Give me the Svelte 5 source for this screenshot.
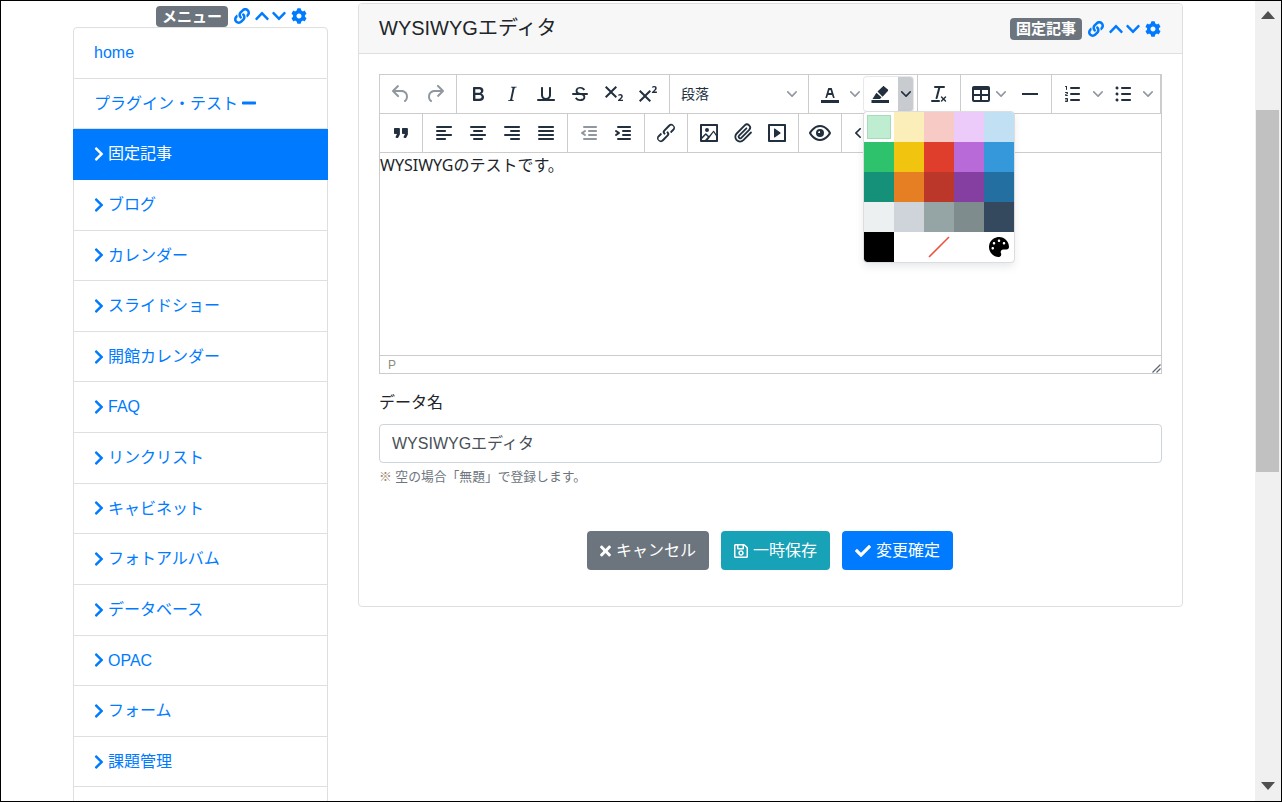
<script>
  const menu = [
    'ブログ', 'カレンダー', 'スライドショー', '開館カレンダー', 'FAQ', 'リンクリスト', 'キャビネット',
    'フォトアルバム', 'データベース', 'OPAC', 'フォーム', '課題管理',
  ];

  // font awesome 5 glyphs: [viewbox width, path]
  const fa = {
    right: [320, 'M285.476 272.971L91.132 467.314c-9.373 9.373-24.569 9.373-33.941 0l-22.667-22.667c-9.357-9.357-9.375-24.522-.04-33.901L188.505 256 34.484 101.255c-9.335-9.379-9.317-24.544.04-33.901l22.667-22.667c9.373-9.373 24.569-9.373 33.941 0L285.475 239.03c9.373 9.372 9.373 24.568.001 33.941z'],
    up: [448, 'M240.971 130.524l194.343 194.343c9.373 9.373 9.373 24.569 0 33.941l-22.667 22.667c-9.357 9.357-24.522 9.375-33.901.04L224 227.495 69.255 381.516c-9.379 9.335-24.544 9.317-33.901-.04l-22.667-22.667c-9.373-9.373-9.373-24.569 0-33.941L207.03 130.525c9.372-9.373 24.568-9.373 33.941-.001z'],
    down: [448, 'M207.029 381.476L12.686 187.132c-9.373-9.373-9.373-24.569 0-33.941l22.667-22.667c9.357-9.357 24.522-9.375 33.901-.04L224 284.505l154.745-154.021c9.379-9.335 24.544-9.317 33.901.04l22.667 22.667c9.373 9.373 9.373 24.569 0 33.941L240.971 381.476c-9.373 9.372-24.569 9.372-33.942 0z'],
    check: [512, 'M173.898 439.404l-166.4-166.4c-9.997-9.997-9.997-26.206 0-36.204l36.203-36.204c9.997-9.998 26.207-9.998 36.204 0L192 312.69 432.095 72.596c9.997-9.997 26.207-9.997 36.204 0l36.203 36.204c9.997 9.997 9.997 26.206 0 36.204l-294.4 294.401c-9.998 9.997-26.207 9.997-36.204-.001z'],
    times: [352, 'M242.72 256l100.07-100.07c12.28-12.28 12.28-32.19 0-44.48l-22.24-22.24c-12.28-12.28-32.19-12.28-44.48 0L176 189.28 75.93 89.21c-12.28-12.28-32.19-12.28-44.48 0L9.21 111.45c-12.28 12.28-12.28 32.19 0 44.48L109.28 256 9.21 356.07c-12.28 12.28-12.28 32.19 0 44.48l22.24 22.24c12.28 12.28 32.2 12.28 44.48 0L176 322.72l100.07 100.07c12.28 12.28 32.2 12.28 44.48 0l22.24-22.24c12.28-12.28 12.28-32.19 0-44.48L242.72 256z'],
    minus: [448, 'M416 208H32c-17.67 0-32 14.33-32 32v32c0 17.67 14.33 32 32 32h384c17.67 0 32-14.33 32-32v-32c0-17.67-14.33-32-32-32z'],
    cog: [512, 'M487.4 315.7l-42.6-24.6c4.3-23.2 4.3-47 0-70.2l42.6-24.6c4.9-2.8 7.1-8.6 5.5-14-11.1-35.6-30-67.8-54.7-94.6-3.8-4.1-10-5.1-14.8-2.3L380.8 110c-17.9-15.4-38.5-27.3-60.8-35.1V25.8c0-5.6-3.9-10.5-9.4-11.7-36.7-8.2-74.3-7.8-109.2 0-5.5 1.2-9.4 6.1-9.4 11.7V75c-22.2 7.9-42.8 19.8-60.8 35.1L88.7 85.5c-4.9-2.8-11-1.9-14.8 2.3-24.7 26.7-43.6 58.9-54.7 94.6-1.7 5.4.6 11.2 5.5 14L67.3 221c-4.3 23.2-4.3 47 0 70.2l-42.6 24.6c-4.9 2.8-7.1 8.6-5.5 14 11.1 35.6 30 67.8 54.7 94.6 3.8 4.1 10 5.1 14.8 2.3l42.6-24.6c17.9 15.4 38.5 27.3 60.8 35.1v49.2c0 5.6 3.9 10.5 9.4 11.7 36.7 8.2 74.3 7.8 109.2 0 5.5-1.2 9.4-6.1 9.4-11.7v-49.2c22.2-7.9 42.8-19.8 60.8-35.1l42.6 24.6c4.9 2.8 11 1.9 14.8-2.3 24.7-26.7 43.6-58.9 54.7-94.6 1.5-5.5-.7-11.3-5.6-14.1zM256 336c-44.1 0-80-35.9-80-80s35.9-80 80-80 80 35.9 80 80-35.9 80-80 80z'],
    link: [512, 'M326.612 185.391c59.747 59.809 58.927 155.698.36 214.59-.11.12-.24.25-.36.37l-67.2 67.2c-59.27 59.27-155.699 59.262-214.96 0-59.27-59.26-59.27-155.7 0-214.96l37.106-37.106c9.84-9.84 26.786-3.3 27.294 10.606.648 17.722 3.826 35.527 9.69 52.721 1.986 5.822.567 12.262-3.783 16.612l-13.087 13.087c-28.026 28.026-28.905 73.66-1.155 101.96 28.024 28.579 74.086 28.749 102.325.51l67.2-67.19c28.191-28.191 28.073-73.757 0-101.83-3.701-3.694-7.429-6.564-10.341-8.569a16.037 16.037 0 0 1-6.947-12.606c-.396-10.567 3.348-21.456 11.698-29.806l21.054-21.055c5.521-5.521 14.182-6.199 20.584-1.731a152.482 152.482 0 0 1 20.522 17.197zM467.547 44.449c-59.261-59.262-155.69-59.27-214.96 0l-67.2 67.2c-.12.12-.25.25-.36.37-58.566 58.892-59.387 154.781.36 214.59a152.454 152.454 0 0 0 20.521 17.196c6.402 4.468 15.064 3.789 20.584-1.731l21.054-21.055c8.35-8.35 12.094-19.239 11.698-29.806a16.037 16.037 0 0 0-6.947-12.606c-2.912-2.005-6.64-4.875-10.341-8.569-28.073-28.073-28.191-73.639 0-101.83l67.2-67.19c28.239-28.239 74.3-28.069 102.325.51 27.75 28.3 26.872 73.934-1.155 101.96l-13.087 13.087c-4.35 4.35-5.769 10.79-3.783 16.612 5.864 17.194 9.042 34.999 9.69 52.721.509 13.906 17.454 20.446 27.294 10.606l37.106-37.106c59.271-59.259 59.271-155.699.001-214.959z'],
    save: [448, 'M433.941 129.941l-83.882-83.882A48 48 0 0 0 316.118 32H48C21.49 32 0 53.49 0 80v352c0 26.51 21.49 48 48 48h352c26.51 0 48-21.49 48-48V163.882a48 48 0 0 0-14.059-33.941zM272 80v80H144V80h128zm122 352H54a6 6 0 0 1-6-6V86a6 6 0 0 1 6-6h42v104c0 13.255 10.745 24 24 24h176c13.255 0 24-10.745 24-24V83.882l78.243 78.243a6 6 0 0 1 1.757 4.243V426a6 6 0 0 1-6 6zM224 232c-48.523 0-88 39.477-88 88s39.477 88 88 88 88-39.477 88-88-39.477-88-88-88zm0 128c-22.056 0-40-17.944-40-40s17.944-40 40-40 40 17.944 40 40-17.944 40-40 40z'],
    palette: [512, 'M204.3 5C104.9 24.4 24.8 104.3 5.2 203.4c-37 187 131.7 326.4 258.8 306.7 41.2-6.4 61.4-54.6 42.5-91.7-23.1-45.4 9.9-98.4 60.9-98.4h79.7c35.8 0 64.8-29.6 64.9-65.3C511.5 97.1 368.1-26.9 204.3 5zM96 320c-17.7 0-32-14.3-32-32s14.3-32 32-32 32 14.3 32 32-14.3 32-32 32zm32-128c-17.7 0-32-14.3-32-32s14.3-32 32-32 32 14.3 32 32-14.3 32-32 32zm128-64c-17.7 0-32-14.3-32-32s14.3-32 32-32 32 14.3 32 32-14.3 32-32 32zm128 64c-17.7 0-32-14.3-32-32s14.3-32 32-32 32 14.3 32 32-14.3 32-32 32z'],
  };

  // editor toolbar icons, 24x24
  const mce = {
    undo: 'M6.4 8H12c3.7 0 6.2 2 6.8 5.1.6 2.7-.4 5.6-2.3 6.8a1 1 0 0 1-1-1.8c1.1-.6 1.8-2.7 1.4-4.6-.5-2.1-2.1-3.5-4.9-3.5H6.4l3.3 3.3a1 1 0 1 1-1.4 1.4l-5-5a1 1 0 0 1 0-1.4l5-5a1 1 0 0 1 1.4 1.4L6.4 8z',
    redo: 'M17.6 10H12c-2.8 0-4.4 1.4-4.9 3.5-.4 2 .3 4 1.4 4.6a1 1 0 1 1-1 1.8c-2-1.2-2.9-4.1-2.3-6.8.6-3 3-5.1 6.8-5.1h5.6l-3.3-3.3a1 1 0 1 1 1.4-1.4l5 5a1 1 0 0 1 0 1.4l-5 5a1 1 0 0 1-1.4-1.4l3.3-3.3z',
    bold: 'M7.8 19c-.3 0-.5 0-.6-.2l-.2-.5V5.7c0-.2 0-.4.2-.5l.6-.2h5c1.5 0 2.7.3 3.5 1 .7.6 1.1 1.4 1.1 2.5a3 3 0 0 1-.6 1.9c-.4.6-1 1-1.6 1.2.4.1.9.3 1.3.6s.8.7 1 1.2c.4.4.5 1 .5 1.6 0 1.3-.4 2.3-1.3 3-.8.7-2.1 1-3.8 1H7.8zm5-8.3c.6 0 1.2-.1 1.6-.5.4-.3.6-.7.6-1.3 0-1.1-.8-1.7-2.3-1.7H9.3v3.5h3.4zm.5 6c.7 0 1.3-.1 1.7-.4.4-.4.6-.9.6-1.5s-.2-1-.7-1.4c-.4-.3-1-.4-2-.4H9.4v3.8h4z',
    italic: 'M16.7 4.7l-.1.9h-.3c-.6 0-1 0-1.4.3-.3.3-.4.6-.5 1.1l-2.1 9.8v.6c0 .5.4.8 1.4.8h.2l-.2.8H8l.2-.8h.2c1.1 0 1.8-.5 2-1.5l2-9.8.1-.5c0-.6-.4-.8-1.4-.8h-.3l.2-.9h5.8z',
    underline: 'M16 5c.6 0 1 .4 1 1v7c0 2.8-2.2 5-5 5s-5-2.2-5-5V6c0-.6.4-1 1-1s1 .4 1 1v7c0 1.7 1.3 3 3 3s3-1.3 3-3V6c0-.6.4-1 1-1zM4 17h16c.6 0 1 .4 1 1s-.4 1-1 1H4a1 1 0 1 1 0-2z',
    strike: 'M15.6 8.5c-.5-.7-1-1.1-1.3-1.3-.6-.4-1.3-.6-2-.6-2.7 0-2.8 1.7-2.8 2.1 0 1.6 1.8 2 3.2 2.3 4.4.9 4.6 2.8 4.6 3.9 0 1.4-.7 4.1-5 4.1A6.2 6.2 0 0 1 7 16.4l1.5-1.1c.4.6 1.6 2 3.7 2 1.6 0 2.5-.4 3-1.2.4-.8.3-2-.8-2.6-.7-.4-1.6-.7-2.9-1-1-.2-3.9-.8-3.9-3.6C7.6 6 10.3 5 12.4 5c2.9 0 4.2 1.6 4.7 2.4l-1.5 1.1zM5 11h14a1 1 0 0 1 0 2H5a1 1 0 0 1 0-2z',
    sub: 'M10.4 10l4.6 4.6-1.4 1.4L9 11.4 4.4 16 3 14.6 7.6 10 3 5.4 4.4 4 9 8.6 13.6 4 15 5.4 10.4 10zM21 19h-5v-1l1-.8 1.7-1.6c.3-.4.5-.8.5-1.2 0-.3 0-.6-.2-.7-.2-.2-.5-.3-.9-.3a2 2 0 0 0-.8.2l-.7.3-.4-1.1 1-.6 1.2-.2c.8 0 1.4.3 1.8.7.4.4.6.9.6 1.5s-.2 1.1-.5 1.6a8 8 0 0 1-1.3 1.3l-.6.6h2.6V19z',
    sup: 'M15 9.4L10.4 14l4.6 4.6-1.4 1.4L9 15.4 4.4 20 3 18.6 7.6 14 3 9.4 4.4 8 9 12.6 13.6 8 15 9.4zm5.9 1.6h-5v-1l1-.8 1.7-1.6c.3-.5.5-.9.5-1.3 0-.3 0-.5-.2-.7-.2-.2-.5-.3-.9-.3l-.8.2-.7.4-.4-1.2c.2-.2.5-.4 1-.5.3-.2.8-.2 1.2-.2.8 0 1.4.2 1.8.6.4.4.6 1 .6 1.6 0 .5-.2 1-.5 1.5l-1.3 1.4-.6.5h2.6V11z',
    textColor: 'M3 18h18v3H3zM8.7 16h-.8a.5.5 0 0 1-.5-.6l2.7-9c.1-.3.3-.4.5-.4h2.8c.2 0 .4.1.5.4l2.7 9a.5.5 0 0 1-.5.6h-.8a.5.5 0 0 1-.4-.4l-.7-2.2c0-.3-.3-.4-.5-.4h-3.4c-.2 0-.4.1-.5.4l-.7 2.2c0 .3-.2.4-.4.4zm2.6-7.6l-.6 2a.5.5 0 0 0 .5.6h1.6a.5.5 0 0 0 .5-.6l-.6-2c0-.3-.3-.4-.5-.4h-.4c-.2 0-.4.1-.5.4z',
    highlight: 'M2.500 18h17.500v3H2.500zM8.500 9.600l5.300-5.200c.4-.4 1-.4 1.400 0l3.700 3.200c.4.4.4 1 0 1.400l-5.300 5.700zM7.400 10.800l5.100 4.500-1.500 1.700H3.500z',
    clear: 'M13.2 6a1 1 0 0 1 0 .2l-2.600 10a1 1 0 0 1-1 .8h-.2a.8.8 0 0 1-.8-1l2.600-10H8a1 1 0 1 1 0-2h9a1 1 0 0 1 0 2h-3.800zM5 18h7a1 1 0 0 1 0 2H5a1 1 0 0 1 0-2zm13 1.500L16.500 18 15 19.500a.7.7 0 0 1-1-1l1.500-1.500-1.500-1.500a.7.7 0 0 1 1-1l1.500 1.500 1.500-1.500a.7.7 0 0 1 1 1L17.500 17l1.500 1.500a.7.7 0 0 1-1 1z',
    table: 'M19 4a2 2 0 0 1 2 2v12a2 2 0 0 1-2 2H5a2 2 0 0 1-2-2V6c0-1.100.9-2 2-2h14zM5 14v4h6v-4H5zm14 0h-6v4h6v-4zm0-6h-6v4h6V8zM5 12h6V8H5v4z',
    hr: 'M4 11h16v2H4z',
    ol: 'M10 17h8c.6 0 1 .4 1 1s-.4 1-1 1h-8a1 1 0 0 1 0-2zm0-6h8c.6 0 1 .4 1 1s-.4 1-1 1h-8a1 1 0 0 1 0-2zm0-6h8c.6 0 1 .4 1 1s-.4 1-1 1h-8a1 1 0 1 1 0-2zM6 4v3.500c0 .3-.2.5-.5.5a.5.5 0 0 1-.5-.5V5h-.5a.5.5 0 0 1 0-1H6zm-1 8.800l.2.2h1.300c.3 0 .5.2.5.5s-.2.5-.5.5H4.900a1 1 0 0 1-.9-1V13c0-.4.3-.8.6-1l1.200-.4.2-.3a.2.2 0 0 0-.2-.2H4.500a.5.5 0 0 1-.5-.5c0-.3.2-.5.5-.5h1.600c.5 0 .9.4.9 1v.1c0 .4-.3.8-.6 1l-1.200.4-.2.3zM7 17v2c0 .6-.4 1-1 1H4.500a.5.5 0 0 1 0-1h1.200c.2 0 .3-.1.3-.3 0-.2-.1-.3-.3-.3H4.400a.4.4 0 1 1 0-.8h1.300c.2 0 .3-.1.3-.3 0-.2-.1-.3-.3-.3H4.500a.5.5 0 1 1 0-1H6c.6 0 1 .4 1 1z',
    ul: 'M11 5h8c.6 0 1 .4 1 1s-.4 1-1 1h-8a1 1 0 0 1 0-2zm0 6h8c.6 0 1 .4 1 1s-.4 1-1 1h-8a1 1 0 0 1 0-2zm0 6h8c.6 0 1 .4 1 1s-.4 1-1 1h-8a1 1 0 0 1 0-2zM4.500 6c0-.4.1-.8.4-1 .3-.4.7-.5 1.100-.5.4 0 .8.1 1 .4.4.3.5.7.5 1.100 0 .4-.1.8-.4 1-.3.4-.7.5-1.100.5-.4 0-.8-.1-1-.4-.4-.3-.5-.7-.5-1.100zm0 6c0-.4.1-.8.4-1 .3-.4.7-.5 1.100-.5.4 0 .8.1 1 .4.4.3.5.7.5 1.100 0 .4-.1.8-.4 1-.3.4-.7.5-1.100.5-.4 0-.8-.1-1-.4-.4-.3-.5-.7-.5-1.100zm0 6c0-.4.1-.8.4-1 .3-.4.7-.5 1.100-.5.4 0 .8.1 1 .4.4.3.5.7.5 1.100 0 .4-.1.8-.4 1-.3.4-.7.5-1.100.5-.4 0-.8-.1-1-.4-.4-.3-.5-.7-.5-1.100z',
    quote: 'M7.500 17h.9c.4 0 .7-.2.9-.6L10.600 14c.2-.4.3-.7.3-1.100V8c0-.6-.4-1-1-1H6c-.6 0-1 .4-1 1v4c0 .6.4 1 1 1h2l-1.300 2.600a1 1 0 0 0 .8 1.400zm8 0h.9c.4 0 .7-.2.9-.6L18.600 14c.2-.4.3-.7.3-1.100V8c0-.6-.4-1-1-1H14c-.6 0-1 .4-1 1v4c0 .6.4 1 1 1h2l-1.300 2.600a1 1 0 0 0 .8 1.400z',
    left: 'M5 5h14c.6 0 1 .4 1 1s-.4 1-1 1H5a1 1 0 1 1 0-2zm0 4h8c.6 0 1 .4 1 1s-.4 1-1 1H5a1 1 0 1 1 0-2zm0 8h8c.6 0 1 .4 1 1s-.4 1-1 1H5a1 1 0 0 1 0-2zm0-4h14c.6 0 1 .4 1 1s-.4 1-1 1H5a1 1 0 0 1 0-2z',
    center: 'M5 5h14c.6 0 1 .4 1 1s-.4 1-1 1H5a1 1 0 1 1 0-2zm3 4h8c.6 0 1 .4 1 1s-.4 1-1 1H8a1 1 0 1 1 0-2zm0 8h8c.6 0 1 .4 1 1s-.4 1-1 1H8a1 1 0 0 1 0-2zm-3-4h14c.6 0 1 .4 1 1s-.4 1-1 1H5a1 1 0 0 1 0-2z',
    right: 'M5 5h14c.6 0 1 .4 1 1s-.4 1-1 1H5a1 1 0 1 1 0-2zm6 4h8c.6 0 1 .4 1 1s-.4 1-1 1h-8a1 1 0 0 1 0-2zm0 8h8c.6 0 1 .4 1 1s-.4 1-1 1h-8a1 1 0 0 1 0-2zm-6-4h14c.6 0 1 .4 1 1s-.4 1-1 1H5a1 1 0 0 1 0-2z',
    justify: 'M5 5h14c.6 0 1 .4 1 1s-.4 1-1 1H5a1 1 0 1 1 0-2zm0 4h14c.6 0 1 .4 1 1s-.4 1-1 1H5a1 1 0 1 1 0-2zm0 4h14c.6 0 1 .4 1 1s-.4 1-1 1H5a1 1 0 0 1 0-2zm0 4h14c.6 0 1 .4 1 1s-.4 1-1 1H5a1 1 0 0 1 0-2z',
    outdent: 'M7 5h12c.6 0 1 .4 1 1s-.4 1-1 1H7a1 1 0 1 1 0-2zm5 4h7c.6 0 1 .4 1 1s-.4 1-1 1h-7a1 1 0 0 1 0-2zm0 4h7c.6 0 1 .4 1 1s-.4 1-1 1h-7a1 1 0 0 1 0-2zm-5 4h12a1 1 0 0 1 0 2H7a1 1 0 0 1 0-2zm1.600-3.800a1 1 0 0 1-1.200 1.600l-3-2a1 1 0 0 1 0-1.600l3-2a1 1 0 0 1 1.200 1.600L6.800 12l1.800 1.200z',
    indent: 'M7 5h12c.6 0 1 .4 1 1s-.4 1-1 1H7a1 1 0 1 1 0-2zm5 4h7c.6 0 1 .4 1 1s-.4 1-1 1h-7a1 1 0 0 1 0-2zm0 4h7c.6 0 1 .4 1 1s-.4 1-1 1h-7a1 1 0 0 1 0-2zm-5 4h12a1 1 0 0 1 0 2H7a1 1 0 0 1 0-2zm-2.600-3.800L6.200 12l-1.800-1.200a1 1 0 0 1 1.200-1.600l3 2a1 1 0 0 1 0 1.600l-3 2a1 1 0 1 1-1.200-1.600z',
    link: 'M6.200 12.300a1 1 0 0 1 1.400 1.400l-2 2a2 2 0 1 0 2.600 2.800l4.800-4.800a1 1 0 0 0 0-1.400 1 1 0 1 1 1.400-1.300 2.900 2.900 0 0 1 0 4L9.600 20a3.900 3.900 0 0 1-5.500-5.500l2-2zm11.600-.6a1 1 0 0 1-1.400-1.400l2-2a2 2 0 1 0-2.600-2.800L11 10.300a1 1 0 0 0 0 1.400 1 1 0 1 1-1.400 1.300 2.900 2.900 0 0 1 0-4L14.400 4a3.900 3.900 0 0 1 5.500 5.500l-2 2z',
    image: 'M5 15.700l3.300-3.200c.3-.3.7-.3 1 0L12 15l4.100-5c.3-.4.8-.4 1 0l2 2.900V5H5v10.700zM5 18V19h3l2.800-2.900-2-2L5 17.900zm14-3l-2.500-3.800L12 17.500 10.900 19H19v-4zM4 3h16c.6 0 1 .4 1 1v16c0 .6-.4 1-1 1H4a1 1 0 0 1-1-1V4c0-.6.4-1 1-1zm6 8a2 2 0 1 1 0-4 2 2 0 0 1 0 4z',
    media: 'M4 3h16c.6 0 1 .4 1 1v16c0 .6-.4 1-1 1H4a1 1 0 0 1-1-1V4c0-.6.4-1 1-1zm1 2v14h14V5H5zm4.800 2.600l5.600 4a.5.5 0 0 1 0 .8l-5.600 4A.5.5 0 0 1 9 16V8a.5.5 0 0 1 .8-.4z',
    preview: 'M3.500 12.500c.5.8 1.100 1.600 1.800 2.300 2 2 4.200 3.200 6.700 3.200s4.700-1.200 6.700-3.200a16.200 16.200 0 0 0 2.100-2.800 15.700 15.700 0 0 0-2.100-2.800c-2-2-4.200-3.200-6.700-3.200a9.300 9.300 0 0 0-6.700 3.200A16.200 16.200 0 0 0 3.200 12c0 .2.2.3.3.5zm-2.400-1l.7-1.200L4 7.800C6.200 5.400 8.900 4 12 4c3 0 5.800 1.400 8.100 3.800a18.200 18.200 0 0 1 2.800 3.700v1l-.7 1.200-2.100 2.500c-2.300 2.400-5 3.800-8.100 3.800a11.300 11.300 0 0 1-8.100-3.800 18.200 18.200 0 0 1-2.800-3.700 1 1 0 0 1 0-1zM12 16a4 4 0 1 1 0-8 4 4 0 0 1 0 8zm0-6a2 2 0 0 0-2 2h2z',
    code: 'M9.800 15.700c.3.3.3.8 0 1-.3.4-.9.4-1.200 0l-4.400-4.100a.8.8 0 0 1 0-1.200l4.400-4.200c.3-.3.9-.3 1.200 0 .3.3.3.8 0 1.100L6 12l3.800 3.700zM14.200 15.700c-.3.3-.3.8 0 1 .3.4.9.4 1.200 0l4.400-4.100c.3-.3.3-.9 0-1.200l-4.400-4.200a.8.8 0 0 0-1.200 0c-.3.3-.3.8 0 1.100L18 12l-3.800 3.700z',
  };
  const chevron = 'M8.700 2.200c.3-.3.8-.3 1 0 .4.4.4.9 0 1.200L5.700 7.800c-.3.3-.9.3-1.200 0L.2 3.400a.8.8 0 0 1 0-1.200c.3-.3.8-.3 1.100 0L5 6l3.700-3.800z';

  const swatches = [
    '#bfedd2', '#fbeeb8', '#f8cac6', '#eccafa', '#c2e0f4',
    '#2dc26b', '#f1c40f', '#e03e2d', '#b96ad9', '#3598db',
    '#169179', '#e67e23', '#ba372a', '#843fa1', '#236fa1',
    '#ecf0f1', '#ced4d9', '#95a5a6', '#7e8c8d', '#34495e',
    '#000000', '#ffffff',
  ];
</script>

{#snippet faIcon(name, size = 16)}
  <svg class="fa" width={size * fa[name][0] / 512} height={size} viewBox="0 0 {fa[name][0]} 512" fill="currentColor"><path d={fa[name][1]} /></svg>
{/snippet}

{#snippet btn(name, off = false)}
  <span class="tb" class:off><svg width="24" height="24" viewBox="0 0 24 24" fill="currentColor"><path d={mce[name]} /></svg></span>
{/snippet}

{#snippet chev()}
  <svg width="10" height="10" viewBox="0 0 10 10" fill="currentColor"><path d={chevron} /></svg>
{/snippet}

{#snippet split(name, active = false)}
  <span class="split" class:active>
    {@render btn(name)}
    <span class="arrow">{@render chev()}</span>
  </span>
{/snippet}

{#snippet tools(label)}
  <div class="tools">
    <span class="badge">{label}</span>
    <span class="tool link">{@render faIcon('link')}</span>
    <span class="tool up">{@render faIcon('up')}</span>
    <span class="tool dn">{@render faIcon('down')}</span>
    <span class="tool cog">{@render faIcon('cog')}</span>
  </div>
{/snippet}

<div class="frame">
  <div class="page">
    <aside class="side">
      {@render tools('メニュー')}
      <nav class="list">
        <a class="item" href="#home">home</a>
        <a class="item" href="#plugin">プラグイン・テスト <span class="minus">{@render faIcon('minus')}</span></a>
        <a class="item active" href="#page">{@render faIcon('right')}<span class="lbl">固定記事</span></a>
        {#each menu as label}
          <a class="item" href="#m">{@render faIcon('right')}<span class="lbl">{label}</span></a>
        {/each}
        <div class="item tail"></div>
      </nav>
    </aside>

    <main class="card">
      <header class="card-head">
        <h5>WYSIWYGエディタ</h5>
        {@render tools('固定記事')}
      </header>

      <div class="card-body">
        <div class="editor">
          <div class="row">
            <div class="group">{@render btn('undo', true)}{@render btn('redo', true)}</div>
            <div class="group">
              {@render btn('bold')}{@render btn('italic')}{@render btn('underline')}{@render btn('strike')}{@render btn('sub')}{@render btn('sup')}
            </div>
            <div class="group">
              <span class="select"><span class="sel-text">段落</span><span class="arrow-plain">{@render chev()}</span></span>
            </div>
            <div class="group">
              {@render split('textColor')}
              {@render split('highlight', true)}
            </div>
            <div class="group">{@render btn('clear')}</div>
            <div class="group">
              <span class="menu-btn">
                <svg width="24" height="24" viewBox="0 0 24 24" fill="currentColor"><path d={mce.table} /></svg>
                <span class="arrow-plain">{@render chev()}</span>
              </span>
              {@render btn('hr')}
            </div>
            <div class="group fill">
              {@render split('ol')}
              {@render split('ul')}
            </div>
          </div>
          <div class="row">
            <div class="group">{@render btn('quote')}</div>
            <div class="group">{@render btn('left')}{@render btn('center')}{@render btn('right')}{@render btn('justify')}</div>
            <div class="group">{@render btn('outdent', true)}{@render btn('indent')}</div>
            <div class="group">{@render btn('link')}</div>
            <div class="group">
              {@render btn('image')}
              <span class="tb">
                <svg width="24" height="24" viewBox="0 0 24 24" fill="none" stroke="currentColor" stroke-width="1.800" stroke-linecap="round"><path d="M20 11.500l-7.600 7.700a4.700 4.700 0 0 1-6.700-6.700l8-8.100a3.100 3.100 0 0 1 4.500 4.400l-7.900 8a1.500 1.500 0 0 1-2.200-2.200l7.300-7.300" /></svg>
              </span>
              {@render btn('media')}
            </div>
            <div class="group">{@render btn('preview')}</div>
            <div class="group">{@render btn('code')}</div>
          </div>

          <div class="content">WYSIWYGのテストです。</div>

          <div class="status">
            <span>P</span>
            <svg width="10" height="10" viewBox="0 0 10 10" stroke="#5c6672" stroke-width="1.200" fill="none"><path d="M9.500 1.500L1.500 9.500M9.500 5.500L5.500 9.500" /></svg>
          </div>

          <div class="palette">
            {#each swatches as c, i}
              <span class="swatch" style:background={i === 0 ? '#fff' : c}>
                {#if i === 0}<i style:background={c}></i>{/if}
              </span>
            {/each}
            <span class="swatch">
              <svg width="30" height="30" viewBox="0 0 30 30"><path d="M25 5L5 25" stroke="#f1503c" stroke-width="1.600" /></svg>
            </span>
            <span class="swatch"></span>
            <span class="swatch">{@render faIcon('palette', 20)}</span>
          </div>
        </div>

        <div class="field-label">データ名</div>
        <input class="input" type="text" value="WYSIWYGエディタ" />
        <div class="help"><span class="note">※</span> 空の場合「無題」で登録します。</div>

        <div class="actions">
          <button class="b gray" type="button">{@render faIcon('times')}<span>キャンセル</span></button>
          <button class="b teal" type="button">{@render faIcon('save')}<span>一時保存</span></button>
          <button class="b blue" type="button">{@render faIcon('check')}<span>変更確定</span></button>
        </div>
      </div>
    </main>
  </div>

  <div class="scrollbar" aria-hidden="true">
    <span class="sb-arrow top"><svg width="14" height="8" viewBox="0 0 14 8"><path d="M7 0l7 8H0z" fill="#505050" /></svg></span>
    <span class="thumb"></span>
    <span class="sb-arrow bot"><svg width="14" height="8" viewBox="0 0 14 8"><path d="M7 8L0 0h14z" fill="#505050" /></svg></span>
  </div>
</div>

<style>
  :global(body) {
    margin: 0;
    overflow: hidden;
    background: #fff;
  }

  .frame {
    box-sizing: border-box;
    width: 1282px;
    height: 802px;
    border: 1px solid #000;
    display: flex;
    overflow: hidden;
    font-family: "Liberation Sans", "Noto Sans CJK JP", sans-serif;
    font-size: 16px;
    color: #212529;
  }

  .page {
    flex: 1;
    min-width: 0;
    display: flex;
    gap: 30px;
    padding-left: 72px;
    align-items: flex-start;
  }

  .fa {
    display: block;
    flex: none;
  }

  /* sidebar */
  .side {
    width: 255px;
    flex: none;
  }
  .tools {
    display: flex;
    align-items: center;
    justify-content: flex-end;
    color: #007bff;
  }
  .side .tools {
    height: 26px;
    padding-right: 21px;
    align-items: flex-end;
  }
  .side .tool {
    margin-bottom: 3px;
  }
  .badge {
    background: #6c757d;
    color: #fff;
    font-size: 15px;
    font-weight: 700;
    line-height: 15px;
    padding: 3.500px 6px;
    border-radius: 4px;
    white-space: nowrap;
  }
  .side .badge {
    padding: 3px 6px;
  }
  .tool.link { margin-left: 6px; }
  .tool.up { margin-left: 5px; }
  .tool.dn { margin-left: 3px; }
  .tool.cog { margin-left: 5px; }

  .list {
    display: flex;
    flex-direction: column;
  }
  .item {
    display: flex;
    align-items: center;
    padding: 12px 20px;
    line-height: 25.620px;
    min-height: 25.620px;
    border: 1px solid #dfdfdf;
    border-top: 0;
    color: #007bff;
    text-decoration: none;
    background: #fff;
    white-space: pre;
  }
  .item:first-child {
    border-top: 1px solid #dfdfdf;
    border-radius: 4px 4px 0 0;
  }
  .item.active {
    background: #007bff;
    border-color: #007bff;
    color: #fff;
  }
  .lbl {
    margin-left: 4px;
  }

  /* main card */
  .card {
    width: 825px;
    box-sizing: border-box;
    margin-top: 2px;
    border: 1px solid #dfdfdf;
    border-radius: 4px;
    background: #fff;
  }
  .card-head {
    height: 49px;
    padding: 0 21px 0 20px;
    display: flex;
    align-items: center;
    justify-content: space-between;
    background: #f7f7f7;
    border-bottom: 1px solid #dfdfdf;
    border-radius: 3px 3px 0 0;
  }
  h5 {
    margin: 0 0 2px;
    font-size: 20px;
    font-weight: 400;
    line-height: 24px;
  }
  .card-body {
    padding: 20px;
  }

  /* editor */
  .editor {
    position: relative;
    height: 300px;
    box-sizing: border-box;
    border: 1px solid #ccc;
    display: flex;
    flex-direction: column;
    color: #222f3e;
  }
  .row {
    display: flex;
    height: 38px;
    border-bottom: 1px solid #ccc;
    flex: none;
  }
  .group {
    display: flex;
    align-items: center;
    padding: 0 4px;
    border-right: 1px solid #ccc;
  }
  .group.fill {
    flex: 1;
  }
  .tb {
    width: 34px;
    height: 34px;
    display: flex;
    align-items: center;
    justify-content: center;
    flex: none;
  }
  .tb.off {
    color: rgba(34, 47, 62, 0.5);
  }
  .select {
    width: 130px;
    height: 34px;
    box-sizing: border-box;
    padding: 0 7px;
    display: flex;
    align-items: center;
    justify-content: space-between;
    font-size: 14px;
  }
  .sel-text {
    margin-bottom: 2px;
  }
  .arrow-plain {
    display: flex;
    color: rgba(34, 47, 62, 0.5);
  }
  .menu-btn {
    width: 48px;
    height: 34px;
    box-sizing: border-box;
    padding-left: 4px;
    display: flex;
    align-items: center;
    gap: 3px;
  }
  .split {
    display: flex;
    height: 34px;
    margin-right: 2px;
    border-radius: 3px;
  }
  .split:last-child {
    margin-right: 0;
  }
  .fill .split {
    margin-right: 1px;
  }
  .split.active {
    box-shadow: 0 0 0 1px #e8e8e8;
  }
  .arrow {
    width: 15px;
    display: flex;
    align-items: center;
    justify-content: center;
    color: rgba(34, 47, 62, 0.5);
  }
  .split.active .arrow {
    background: #c8cbcf;
    color: #222f3e;
    border-radius: 0 3px 3px 0;
  }
  .content {
    flex: 1;
    font-family: "Noto Sans", "Noto Sans CJK JP", sans-serif;
    line-height: 24px;
    color: #212529;
  }
  .status {
    height: 18px;
    flex: none;
    box-sizing: border-box;
    border-top: 1px solid #ccc;
    padding-left: 8px;
    display: flex;
    align-items: flex-end;
    justify-content: space-between;
    font-size: 12px;
    line-height: 15px;
    color: #8c8c7c;
  }
  .palette {
    position: absolute;
    top: 37px;
    left: 484px;
    width: 150px;
    display: grid;
    grid-template-columns: repeat(5, 30px);
    grid-auto-rows: 30px;
    background: #fff;
    border-radius: 3px;
    outline: 1px solid #ddd;
    box-shadow: 0 4px 8px rgba(34, 47, 62, 0.12);
    overflow: hidden;
  }
  .swatch {
    display: flex;
    align-items: center;
    justify-content: center;
    color: #000;
  }
  .swatch i {
    display: block;
    width: 22px;
    height: 22px;
    border: 1px solid #a4dcba;
  }

  /* form */
  .field-label {
    margin-top: 16px;
    line-height: 26px;
    margin-bottom: 8px;
  }
  .input {
    display: block;
    box-sizing: border-box;
    width: 100%;
    height: 39px;
    padding: 0 12px 3px;
    border: 1px solid #ced4da;
    border-radius: 4px;
    font: inherit;
    color: #495057;
    outline: none;
  }
  .help {
    margin-top: 4px;
    font-size: 12.800px;
    line-height: 19px;
    color: #6c757d;
  }
  .note {
    color: #9a8468;
  }
  .actions {
    display: flex;
    justify-content: center;
    gap: 12px;
    margin: 45px 1px 16px 0;
  }
  .b {
    display: flex;
    align-items: center;
    gap: 5px;
    height: 39px;
    padding: 0 12px;
    border: 1px solid transparent;
    border-radius: 4px;
    color: #fff;
    font: inherit;
  }
  .b span {
    margin-bottom: 3px;
  }
  .gray { background: #6c757d; }
  .teal { background: #17a2b8; }
  .blue { background: #007bff; }

  /* fake window scrollbar */
  .scrollbar {
    width: 26px;
    flex: none;
    box-sizing: border-box;
    padding-right: 1px;
    background: #f0f0f0;
    display: flex;
    flex-direction: column;
    align-items: center;
  }
  .sb-arrow {
    display: flex;
    align-items: center;
    justify-content: center;
    flex: none;
  }
  .sb-arrow.top {
    height: 28px;
  }
  .sb-arrow.bot {
    height: 30px;
    margin-top: auto;
  }
  .thumb {
    width: 23px;
    height: 362px;
    margin-top: 81px;
    background: #c1c1c1;
    flex: none;
  }
</style>
